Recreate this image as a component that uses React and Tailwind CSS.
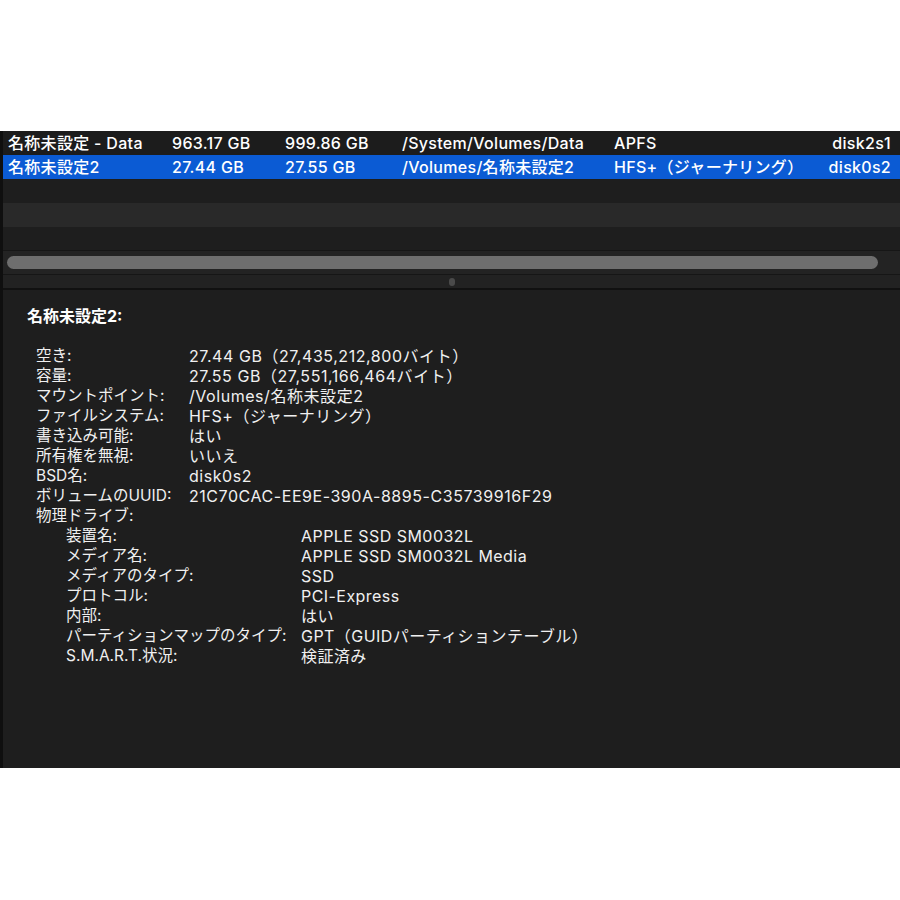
import React from "react";

const font = { fontFamily: 'Inter, "Noto Sans CJK JP", sans-serif' };

const rows = [
  { name: "名称未設定 - Data", a: "963.17 GB", b: "999.86 GB", mount: "/System/Volumes/Data", fs: "APFS", dev: "disk2s1", sel: false },
  { name: "名称未設定2", a: "27.44 GB", b: "27.55 GB", mount: "/Volumes/名称未設定2", fs: "HFS+（ジャーナリング）", dev: "disk0s2", sel: true },
];

const info = [
  ["空き:", "27.44 GB（27,435,212,800バイト）"],
  ["容量:", "27.55 GB（27,551,166,464バイト）"],
  ["マウントポイント:", "/Volumes/名称未設定2"],
  ["ファイルシステム:", "HFS+（ジャーナリング）"],
  ["書き込み可能:", "はい"],
  ["所有権を無視:", "いいえ"],
  ["BSD名:", "disk0s2"],
  ["ボリュームのUUID:", "21C70CAC-EE9E-390A-8895-C35739916F29"],
];

const drive = [
  ["装置名:", "APPLE SSD SM0032L"],
  ["メディア名:", "APPLE SSD SM0032L Media"],
  ["メディアのタイプ:", "SSD"],
  ["プロトコル:", "PCI-Express"],
  ["内部:", "はい"],
  ["パーティションマップのタイプ:", "GPT（GUIDパーティションテーブル）"],
  ["S.M.A.R.T.状況:", "検証済み"],
];

export default function App() {
  return (
    <div className="w-[900px] h-[900px] bg-white pt-[131px]" style={font}>
      <div className="h-[637px] bg-[#1e1e1e] border-l-[3px] border-[#0f0f0f] flex flex-col text-white">
        {rows.map((r, i) => (
          <div
            key={i}
            className={`h-[24px] flex items-center text-[16px] tracking-[0.3px] font-medium leading-none ${r.sel ? "bg-[#0b5bd4]" : "bg-[#1c1c1c]"}`}
          >
            <div className="w-[169px] pl-[5px] whitespace-nowrap">{r.name}</div>
            <div className="w-[113px] whitespace-nowrap">{r.a}</div>
            <div className="w-[117px] whitespace-nowrap">{r.b}</div>
            <div className="w-[212px] whitespace-nowrap">{r.mount}</div>
            <div className="flex-1 whitespace-nowrap">{r.fs}</div>
            <div className="pr-[9px] whitespace-nowrap">{r.dev}</div>
          </div>
        ))}
        <div className="h-[24px] bg-[#1e1e1e]" />
        <div className="h-[24px] bg-[#292929]" />
        <div className="h-[23px] bg-[#1e1e1e]" />
        <div className="h-[25px] bg-[#232323] border-t border-[#2e2e2e] border-b border-[#161616] flex items-center pl-[4px] pr-[22px]">
          <div className="h-[13px] flex-1 rounded-full bg-[#6e6e6e]" />
        </div>
        <div className="h-[15px] bg-[#222222] border-b-2 border-[#111111] flex items-center justify-center">
          <div className="w-[6px] h-[8px] rounded-full bg-[#4a4a4a]" />
        </div>
        <div className="flex-1 bg-[#1e1e1e] pt-[16px] pl-[24px] text-[16px] leading-[20px] text-[#f0f0f0]">
          <div className="font-bold text-white tracking-[0px]">名称未設定2:</div>
          <div className="mt-[20px] pl-[9px]">
            {info.map(([k, v], i) => (
              <div key={i} className="flex">
                <div className="w-[153px] whitespace-nowrap text-[15.5px] tracking-[0px]">{k}</div>
                <div className="whitespace-nowrap tracking-[0.55px]">{v}</div>
              </div>
            ))}
            <div className="text-[15.5px]">物理ドライブ:</div>
            <div className="pl-[30px]">
              {drive.map(([k, v], i) => (
                <div key={i} className="flex">
                  <div className="w-[235px] whitespace-nowrap text-[15.5px] tracking-[0px]">{k}</div>
                  <div className="whitespace-nowrap tracking-[0.45px]">{v}</div>
                </div>
              ))}
            </div>
          </div>
        </div>
      </div>
    </div>
  );
}
